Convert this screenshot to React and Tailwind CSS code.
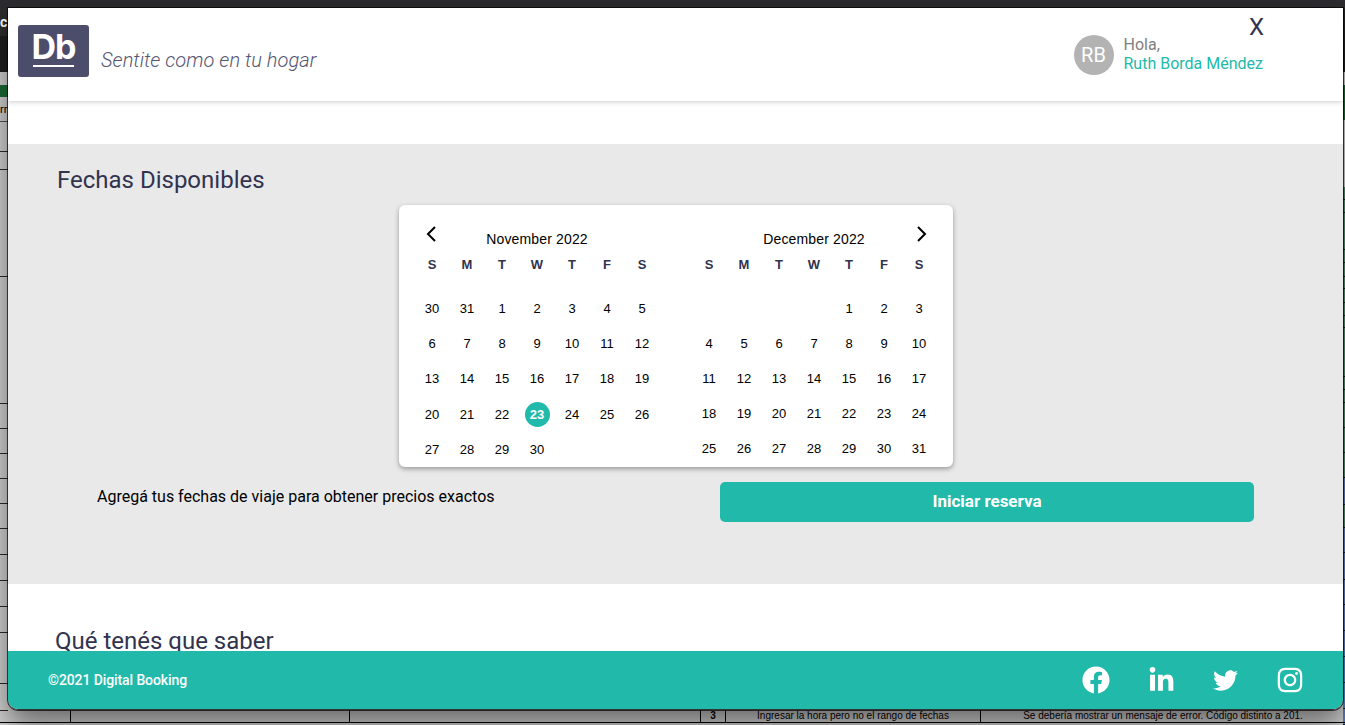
import React from "react";
import { FaFacebook, FaLinkedinIn, FaTwitter, FaInstagram } from "react-icons/fa";

const DOW = ["S", "M", "T", "W", "T", "F", "S"];
const NOV = [30, 31, 1, 2, 3, 4, 5, 6, 7, 8, 9, 10, 11, 12, 13, 14, 15, 16, 17, 18, 19, 20, 21, 22, 23, 24, 25, 26, 27, 28, 29, 30];
const DEC = ["", "", "", "", 1, 2, 3, 4, 5, 6, 7, 8, 9, 10, 11, 12, 13, 14, 15, 16, 17, 18, 19, 20, 21, 22, 23, 24, 25, 26, 27, 28, 29, 30, 31];
const SIDE_ROWS = [30, 18, 107, 127, 25, 25, 25, 25, 25, 26, 26, 26, 26, 51, 27];
const GREEN = "#4f8f6a";
const BLUE = "#5f7fbe";
const RIGHT_ROWS = [
  [13, GREEN], [13, GREEN], [37, GREEN], [13, GREEN], [14, GREEN], [12, GREEN], [14, GREEN], [13, GREEN], [12, GREEN],
  [49, GREEN], [13, GREEN], [13, GREEN], [25, GREEN], [25, GREEN], [25, GREEN],
  [27, BLUE], [23, GREEN], [25, BLUE], [27, BLUE], [25, BLUE], [26, BLUE], [26, BLUE], [26, BLUE], [26, BLUE], [16, BLUE],
];

function Month({ title, days, selected, rowsClass }) {
  return (
    <div className="w-[245px]">
      <div className="h-[20px] leading-[20px] text-center text-[14px] tracking-[0.15px] text-black">{title}</div>
      <div className="grid grid-cols-7 mt-[6px] h-[20px] leading-[20px] text-center text-[13px] font-bold text-[#31334f]">
        {DOW.map((d, i) => (
          <div key={i}>{d}</div>
        ))}
      </div>
      <div className={`grid grid-cols-7 mt-[16px] text-[13px] text-black text-center ${rowsClass}`}>
        {days.map((d, i) => (
          <div key={i} className="flex items-center justify-center">
            {d === selected ? (
              <span className="w-[25px] h-[25px] rounded-full bg-[#21baaa] text-white font-bold flex items-center justify-center">{d}</span>
            ) : (
              d
            )}
          </div>
        ))}
      </div>
    </div>
  );
}

function Chevron({ dir, className }) {
  return (
    <svg className={className} width="12" height="16" viewBox="0 0 12 16" fill="none" stroke="#000" strokeWidth="2">
      <path d={dir === "left" ? "M10 1 L3 8 L10 15" : "M2 1 L9 8 L2 15"} />
    </svg>
  );
}

export default function App() {
  return (
    <div className="relative w-[1345px] h-[725px] overflow-hidden bg-[#d2d2d2] font-['Roboto',sans-serif]">
      {/* Backdrop: spreadsheet seen behind the window */}
      <div className="h-[8px] bg-[#2c2c30]" />
      <div className="h-[28px] w-[8px] overflow-hidden bg-[#2d2d2d] text-white text-[14px] leading-[28px] font-bold">c</div>
      <div className="h-[36px] w-[8px] bg-[#1f1f1f]" />
      <div className="h-[13px] w-[8px]" />
      <div className="h-[12px] w-[8px] bg-[#1b6b35]" />
      <div className="h-[25px] w-[8px] overflow-hidden border-b border-black/60 text-[11px] leading-[25px] text-black">rr</div>
      {SIDE_ROWS.map((h, i) => (
        <div key={i} style={{ height: h }} className="w-[8px] border-b border-black/80" />
      ))}
      <div className="absolute right-0 top-[8px] bottom-0 w-[2px] flex flex-col">
        <div className="h-[64px] shrink-0 bg-[#1f1f1f]" />
        <div className="h-[13px] shrink-0" />
        <div className="h-[35px] shrink-0 bg-[#1b6b35]" />
        <div className="h-[67px] shrink-0" />
        {RIGHT_ROWS.map(([h, c], i) => (
          <div key={i} style={{ height: h, backgroundColor: c }} className="shrink-0 border-b border-black/70" />
        ))}
      </div>
      <div className="absolute left-0 right-0 bottom-[2px] h-[13px] flex border-b border-black text-[10px] leading-[12px] text-center text-black font-['Liberation_Sans',sans-serif]">
        <div className="w-[71px] border-r border-black" />
        <div className="w-[279px] border-r border-black" />
        <div className="w-[351px] border-r border-black" />
        <div className="w-[25px] border-r border-black font-bold">3</div>
        <div className="w-[255px] border-r border-black">Ingresar la hora pero no el rango de fechas</div>
        <div className="flex-1">Se debería mostrar un mensaje de error. Código distinto a 201.</div>
      </div>

      {/* Window */}
      <div className="absolute left-[8px] top-[8px] w-[1335px] h-[702px] flex flex-col bg-white rounded-b-[10px] overflow-hidden border-b border-[#333] shadow-[0_15px_30px_rgba(0,0,0,0.5)] outline outline-[1px] outline-black/70">
        <header className="relative z-10 h-[93px] shrink-0 flex items-start bg-white shadow-[0_1px_5px_rgba(0,0,0,0.2)]">
          <div className="ml-[10px] mt-[17px] w-[71px] h-[52px] rounded-[3px] bg-[#4c4c6b] flex flex-col items-center">
            <span className="text-white font-bold text-[34px] leading-[40px] tracking-[-1px] mt-[2px] font-['Inter',sans-serif]">Db</span>
            <span className="mt-[-2px] w-[41px] h-[2px] bg-white" />
          </div>
          <p className="ml-[12px] mt-[39px] text-[20px] leading-[26px] tracking-[0.05px] italic font-light text-[#545672]">Sentite como en tu hogar</p>
          <div className="ml-auto mr-[80px] mt-[27px] flex items-center">
            <div className="w-[40px] h-[40px] rounded-full bg-[#b3b3b3] text-white text-[20px] flex items-center justify-center">RB</div>
            <div className="ml-[10px] mb-[2px] text-[16px] leading-[19px]">
              <div className="text-[#808080]">Hola,</div>
              <div className="text-[#21baaa]">Ruth Borda Méndez</div>
            </div>
          </div>
          <button className="absolute left-[1241px] top-[5px] text-[24px] leading-[28px] text-[#31334f]">X</button>
        </header>

        <main className="flex-1 overflow-hidden">
          <section className="mt-[43px] h-[440px] bg-[#e9e9e9]">
            <h2 className="pl-[49px] pt-[21px] h-[61px] text-[24px] leading-[30px] text-[#31334f]">Fechas Disponibles</h2>
            <div className="relative mx-auto w-[554px] h-[262px] rounded-[6px] bg-white shadow-[0_2px_5px_rgba(0,0,0,0.35)] flex justify-between px-[16px] pt-[24px] font-['Liberation_Sans',sans-serif]">
              <Chevron dir="left" className="absolute left-[26px] top-[21px]" />
              <Chevron dir="right" className="absolute right-[25px] top-[21px]" />
              <Month title="November 2022" days={NOV} selected={23} rowsClass="auto-rows-[35.25px]" />
              <Month title="December 2022" days={DEC} rowsClass="auto-rows-[35px]" />
            </div>
            <div className="flex items-start mt-[15px]">
              <p className="ml-[89px] mt-[4px] w-[623px] text-[16px] leading-[22px] text-black">Agregá tus fechas de viaje para obtener precios exactos</p>
              <button className="w-[534px] h-[40px] rounded-[5px] bg-[#21baaa] text-white font-bold text-[17px]">Iniciar reserva</button>
            </div>
          </section>
          <h2 className="pl-[47px] mt-[42px] text-[24px] leading-[30px] text-[#31334f]">Qué tenés que saber</h2>
        </main>

        <footer className="h-[58px] shrink-0 bg-[#21baaa] flex items-center text-white">
          <span className="ml-[40px] text-[14px] font-medium tracking-[-0.1px]">©2021 Digital Booking</span>
          <div className="ml-auto mr-[39px] flex items-center gap-[38px]">
            <FaFacebook size={28} />
            <FaLinkedinIn size={27} />
            <FaTwitter size={25} />
            <FaInstagram size={28} />
          </div>
        </footer>
      </div>
    </div>
  );
}
